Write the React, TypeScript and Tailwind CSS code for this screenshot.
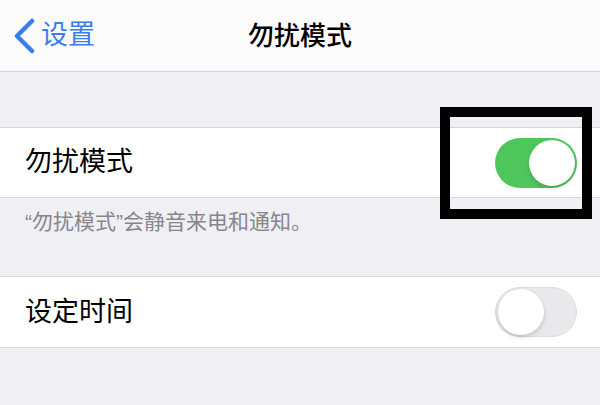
const font = { fontFamily: '"Liberation Sans", "Noto Sans CJK SC", sans-serif' };

function Toggle({ on }: { on: boolean }) {
  return (
    <span
      className={
        on
          ? "flex h-[50px] w-[82px] items-center justify-end rounded-full bg-[#4fc65c] p-[2px]"
          : "flex h-[50px] w-[82px] items-center justify-start rounded-full border border-[#dcdce0] bg-[#e9e9eb] p-[2px]"
      }
    >
      <span className="size-[46px] rounded-full bg-white shadow-[0_2px_4px_rgba(0,0,0,0.18)]" />
    </span>
  );
}

export default function App() {
  return (
    <div className="relative h-[405px] w-[600px] overflow-hidden bg-[#efeff4]" style={font}>
      <header className="relative flex h-[72px] items-center border-b border-[#cfcfd4] bg-[#fbfbfb]">
        <div className="flex items-center gap-[6px] pl-[13px] text-[27px] text-[#3a7ee8]">
          <svg width="22" height="36" viewBox="0 0 22 36" aria-hidden="true">
            <path d="M19 3 L4 18 L19 33" fill="none" stroke="#3a7ee8" strokeWidth="4.5" strokeLinecap="round" strokeLinejoin="round" />
          </svg>
          <span className="leading-none">设置</span>
        </div>
        <h1 className="absolute left-1/2 top-1/2 -translate-x-1/2 -translate-y-1/2 text-[26px] font-medium leading-none text-black">
          勿扰模式
        </h1>
      </header>

      <div className="h-[55px]" />

      <div className="flex h-[71px] items-center justify-between border-y border-[#d6d6da] bg-white pl-[25px] pr-[23px]">
        <span className="text-[27px] text-black">勿扰模式</span>
        <Toggle on />
      </div>

      <div className="h-[78px] pl-[25px] pt-[11px]">
        <p className="text-[21px] leading-[26px] text-[#86868b]">“勿扰模式”会静音来电和通知。</p>
      </div>

      <div className="flex h-[72px] items-center justify-between border-y border-[#d6d6da] bg-white pl-[25px] pr-[23px]">
        <span className="text-[27px] text-black">设定时间</span>
        <Toggle on={false} />
      </div>

      <div className="pointer-events-none absolute left-[440px] top-[107px] h-[112px] w-[152px] border-[10px] border-black" />
    </div>
  );
}
